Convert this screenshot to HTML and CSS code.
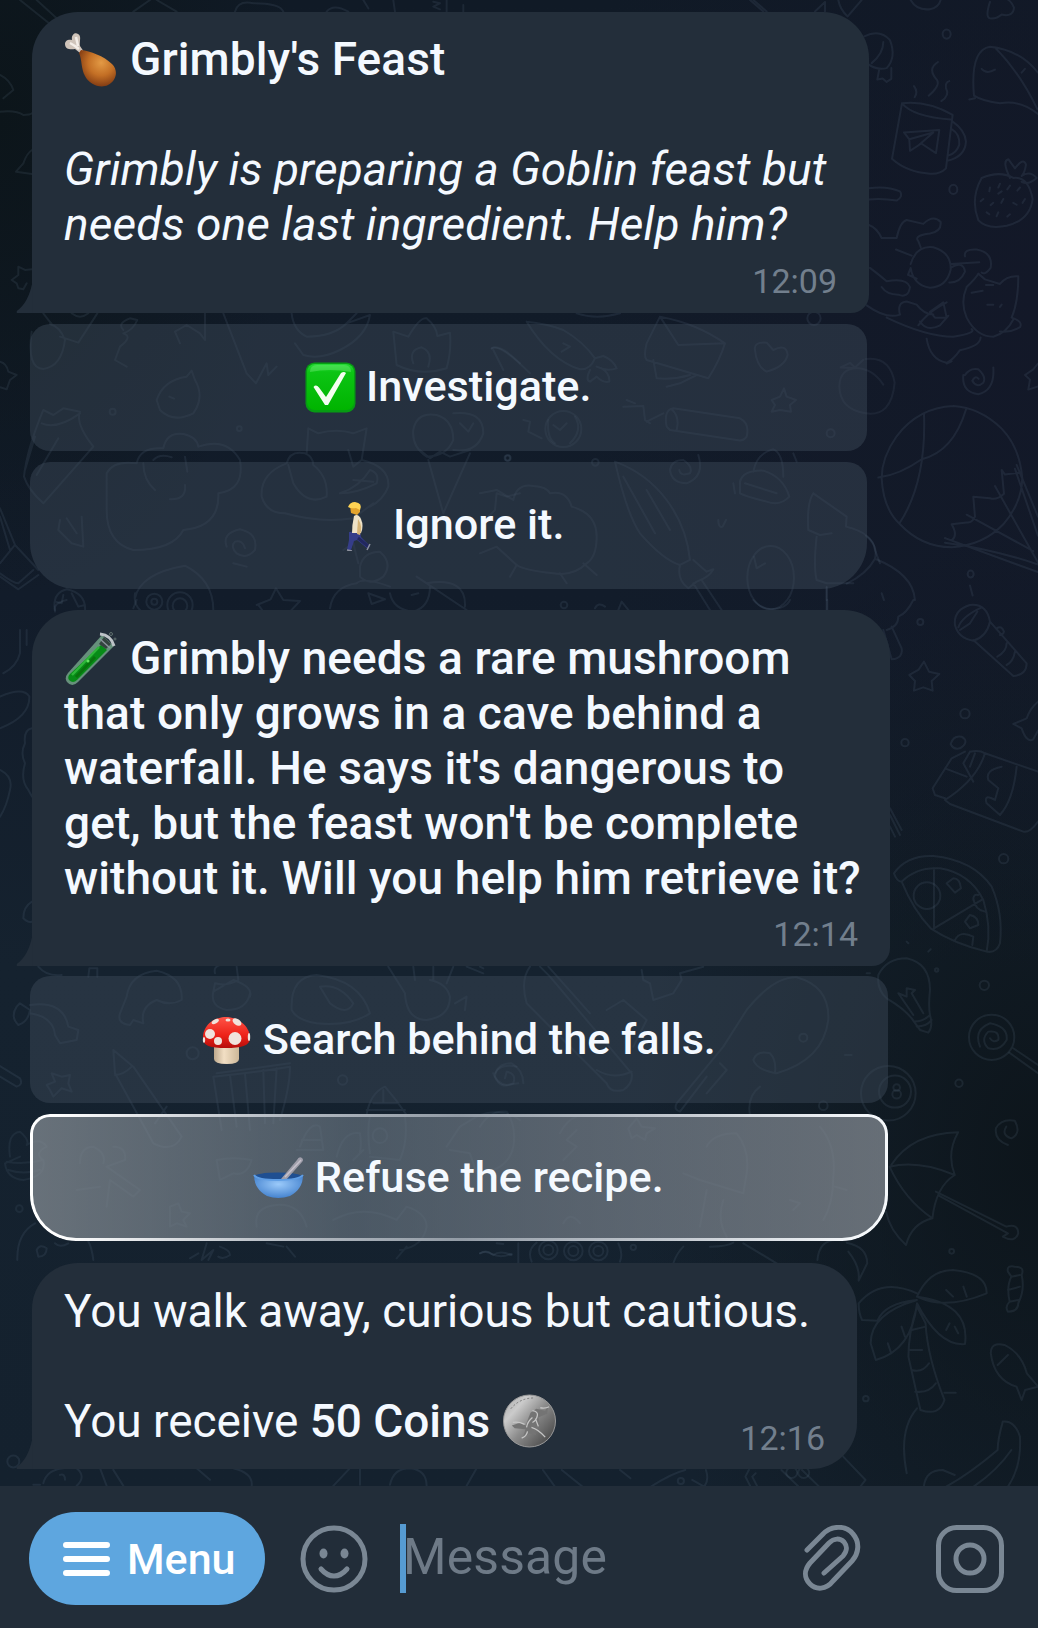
FILE: index.html
```html
<!DOCTYPE html>
<html lang="en">
<head>
<meta charset="utf-8">
<title>Grimbly's Feast</title>
<link rel="stylesheet" href="styles.css">
</head>
<body>
<main class="chat">
  <svg class="wallpaper" viewBox="0 0 1038 1486" aria-hidden="true">
    <!-- top right: mug, cap, strawberry, cat, balloon -->
    <g transform="translate(700 0) scale(.3333 .3827)">
      <path d="M150 0L190 30M160 0L200 30M345 30L375 5V30M415 0Q420 25 443 43L485 0M632 0Q650 28 690 24Q716 20 722 0M870 5Q855 45 870 48Q890 50 905 38Q940 45 942 20Q935 5 925 0"/>
      <path d="M493 95Q540 75 570 105Q590 150 560 178Q530 185 500 165M550 110Q550 140 515 165M538 180L532 208L548 205L560 214L574 206V178"/>
      <path d="M606 270L576 415Q620 450 690 454Q720 456 738 440L758 300Q680 262 606 270Q640 305 752 312M758 318Q795 340 798 370Q795 410 742 420M756 338Q780 350 778 378Q770 400 746 406M612 346L718 340L708 400L664 375L630 394L628 364ZM628 364L700 346L655 380M644 254Q655 240 642 225M686 250Q720 225 712 210Q680 180 714 162M724 264Q750 250 738 230Q735 215 748 212"/>
      <path d="M822 250Q810 130 870 122Q960 130 1014 190M822 250Q850 265 900 270Q960 260 1014 298M885 124Q960 190 1012 285M845 180Q860 195 885 182M965 190L975 180M808 260L825 257"/>
      <circle cx="740" cy="89" r="12"/><circle cx="760" cy="495" r="12"/>
      <path d="M845 465Q810 520 835 575Q860 600 920 590Q990 575 998 520Q985 460 940 465Q900 445 845 465M930 465Q905 420 925 416L945 440Q970 410 978 430Q975 450 965 460Q990 445 1010 465Q985 485 965 475M870 490L868 500M900 480L895 490M930 485L922 495M960 490L952 498M850 520L842 526M880 530L872 536M910 520L904 530M940 530L950 535M975 520L968 530M860 555L868 560M895 555L890 565M930 560L922 566M905 500L895 506"/>
      <path d="M507 492Q560 485 600 500Q610 515 590 524Q550 518 507 521M507 588Q530 595 545 622H590Q600 580 620 575L670 585Q700 560 722 580Q725 605 690 610Q640 615 655 630L662 646M588 652L635 668M632 690Q650 640 700 646Q755 660 752 705Q740 750 690 752Q640 745 632 700L624 718L650 728M752 690L838 685M795 670Q790 650 830 652Q880 660 872 700Q855 720 845 712M752 700Q790 680 795 710Q780 740 748 738M510 700Q540 720 560 735Q620 725 630 750Q625 780 595 770Q560 770 545 750M500 798Q560 835 600 822Q590 790 620 788L650 796Q670 820 700 822M560 830Q680 880 760 880Q830 870 815 860M655 850Q680 820 720 800L740 790M660 840Q680 868 720 850L745 825M690 815L730 790L740 830L705 830ZM800 750Q780 790 800 830Q830 880 880 880Q920 870 940 835M800 750Q830 725 835 715L855 730L900 742Q920 720 955 722Q955 790 935 830Q970 840 960 855Q930 870 900 866M815 765L848 760M858 745H880M862 796H880M900 802L905 796M680 885Q690 940 740 948Q760 940 780 915Q840 905 842 882M740 950L755 944"/>
      <path d="M790 980Q785 1025 835 1030Q885 1020 880 960M795 980Q810 960 835 965Q860 985 850 1000Q830 1015 817 995Q825 980 836 990M1014 950L1000 965L975 980L990 992L985 1018L1014 1010"/>
      <path d="M497 938Q570 930 584 1000Q575 1090 497 1080Q420 1070 418 1010Q420 960 475 962L422 960L450 948L465 960L490 940M475 962Q520 965 550 1005" class="dim"/>
      <path d="M760 1061Q655 1065 590 1140Q545 1195 545 1250Q550 1330 600 1370Q665 1430 755 1430Q850 1425 910 1370Q965 1315 967 1250Q960 1170 905 1120Q840 1065 760 1061M672 1080Q680 1260 598 1368M798 1070Q760 1180 665 1200Q600 1240 535 1248M958 1235L915 1240L905 1228L912 1290Q890 1308 870 1302L820 1298L825 1350Q815 1368 800 1365L755 1370Q775 1400 755 1412L735 1406L1014 1495M735 1418Q880 1435 1014 1475M800 1345L1000 1440M885 1270L1014 1470M950 1215L1014 1350M945 1225L1014 1400"/>
      <path d="M497 1400Q535 1425 525 1460Q640 1500 645 1568M525 1460Q500 1500 440 1525M380 1535V1568M545 1550L552 1568M810 1530L818 1556"/><circle cx="812" cy="1500" r="9"/>
    </g>
    <!-- left part of the first keyboard -->
    <g transform="translate(0 300) scale(.3333)">
      <path d="M0 185Q20 190 25 215L50 225L30 240L20 268L0 262M130 40Q145 60 155 72M215 40Q240 60 265 40M292 40L235 128L180 110M95 95Q80 205 130 207Q185 200 195 120Q180 80 150 72M370 90Q350 70 390 55L412 60Q400 90 370 100Q400 110 360 140L345 180L380 200M525 95L560 75L600 100L615 120V40M525 95L540 130M670 40L740 220L768 250L800 190L805 225L830 200M875 40Q880 90 920 110Q1000 110 1040 70L1110 45Q1100 110 1020 150Q960 180 910 165L885 130M1040 70L1070 40"/>
      <path d="M1190 195L1180 95L1225 110Q1260 50 1280 55Q1310 80 1312 108L1350 98Q1355 150 1340 205Q1260 230 1190 195M1240 190Q1225 150 1265 142Q1300 155 1285 200M1475 145Q1500 130 1560 190M470 300Q490 240 560 230L575 212L585 240Q615 290 580 340Q520 370 480 330ZM508 290L522 296"/>
      <path d="M72 530Q80 450 130 330L160 345L190 325L240 335Q225 370 280 440L130 610Q85 570 72 530ZM125 370Q170 390 240 340M105 410L75 510M175 415L110 525"/>
      <path d="M320 520Q340 480 410 490Q420 440 490 445Q500 395 550 402Q590 410 595 440Q680 410 720 480Q735 570 655 580Q660 680 550 690Q520 750 400 750Q320 730 320 630ZM460 480Q480 460 515 472M430 490Q430 540 465 570M555 470L562 515M555 555Q560 600 510 598M860 490Q780 520 785 590Q800 640 855 640Q960 670 1060 655L1120 610M860 490Q870 450 915 460Q940 470 940 495Q985 530 980 590Q920 620 880 550L865 495M920 460L925 385L955 400Q1010 385 1060 400L1100 385L1085 480Q1170 500 1165 560Q1150 600 1110 620M1045 450L1060 500L1085 480M1020 580Q1080 560 1110 510Q1140 520 1130 550Q1070 580 1020 580M1060 540L1120 545"/>
      <path d="M1240 390Q1250 335 1310 345Q1360 360 1360 420Q1340 470 1280 470Q1235 440 1240 390M1360 340Q1450 330 1450 400Q1430 460 1360 450M1260 450L1290 475L1320 455L1350 470L1410 450M1285 480L1330 640L1410 460M1380 370L1405 395L1420 370"/>
      <circle cx="338" cy="335" r="9"/><circle cx="718" cy="386" r="7"/><circle cx="1522" cy="474" r="8"/>
      <path d="M0 625L45 735L0 790M0 650L30 750M45 735L115 810M0 830L55 868L115 825M0 820Q40 850 55 850L100 810M180 660L175 690L215 730L250 740L245 650M200 655L230 700M680 740Q665 700 720 688Q775 700 765 750Q740 780 710 760Q690 740 705 725Q730 720 735 745M700 790L740 800M405 895Q420 820 555 797Q640 840 640 930M405 880Q400 910 420 930M1030 750L1060 730L1075 790M1080 800Q1090 755 1140 755Q1180 790 1150 830Q1110 860 1080 830ZM990 925Q1000 860 1070 850Q1090 830 1170 860M1170 880Q1180 930 1240 935Q1290 920 1290 860M1250 830L1400 930M1280 850Q1400 830 1395 920M1105 880L1155 898L1115 912ZM1235 885L1255 880"/>
      <circle cx="463" cy="905" r="24"/><circle cx="463" cy="905" r="9"/><circle cx="540" cy="915" r="38"/><circle cx="540" cy="917" r="22"/>
      <path d="M165 935Q155 880 200 868Q260 880 255 935M165 905L185 910L190 885M215 880L235 920L255 915M770 915L812 898L828 865L850 900L900 903L870 935M775 915L790 935M1455 660L1485 630L1490 580L1520 590L1560 580"/>
    </g>
    <!-- right part of the first keyboard -->
    <g transform="translate(480 300) scale(.3333)">
      <path d="M290 40Q350 60 420 40M140 65Q200 70 250 90Q310 125 345 175Q330 210 300 208Q210 180 140 65M345 175L370 168Q400 180 410 205Q380 215 350 200M330 210Q315 240 330 245L350 230Q370 250 388 245Q390 220 365 205M250 130L270 140L245 155M35 145Q60 130 150 220M40 150L70 210M540 50L500 130Q490 170 500 180L685 235Q720 180 735 130Q650 70 540 50L595 135L735 130M520 180L530 235Q580 240 630 225M560 260L600 250L650 225M825 150Q820 125 860 128L880 150Q920 130 923 165Q915 200 860 215Q830 200 825 150M875 300L900 290L912 265L920 290L948 300L930 315L933 335L900 330L875 335L885 315ZM500 365L550 340M560 380Q550 330 580 325L780 355Q810 370 800 410Q790 425 770 420L570 390ZM575 328Q600 350 590 390M430 320L490 318L495 360L510 370M440 300L465 310M130 360L150 365L145 395L185 415"/>
      <circle cx="250" cy="387" r="54"/><path d="M220 375L240 390L260 370M205 360Q200 415 225 430M285 350Q310 390 270 430"/>
      <circle cx="1002" cy="55" r="20"/><circle cx="1052" cy="400" r="12"/><circle cx="346" cy="487" r="10"/><circle cx="84" cy="474" r="8"/><circle cx="252" cy="915" r="10"/>
      <path d="M405 485Q440 640 480 700Q550 780 600 795L630 780Q620 680 560 600Q500 520 405 485ZM430 530L525 700M500 570L570 690M600 795Q590 840 625 865L650 845Q690 830 700 808L680 815L640 780M640 850L690 930M665 840L725 930M655 465Q675 530 620 550Q575 550 570 510Q575 480 610 480Q640 500 630 520Q600 530 598 510M820 515Q830 460 880 448Q910 460 910 530M780 545Q790 510 850 512Q910 530 928 590Q900 620 860 605Q800 590 780 580ZM795 550L890 580M940 460L950 485M760 550L765 580M1000 580Q980 610 985 690L1020 705L1055 700M1000 580L1100 650L1098 680Q1180 700 1185 750L1200 790M1010 710Q1000 800 1010 840L1040 850L1120 850M1040 860V930M715 660Q715 685 728 680L738 660"/>
      <ellipse cx="872" cy="833" rx="70" ry="95"/><path d="M822 770L830 805L855 790M0 580L50 570L100 600Q110 550 160 558Q200 560 210 580Q260 570 275 620Q350 640 350 710Q350 770 320 790Q280 830 220 820Q130 810 110 795L50 740L0 760M110 795L90 830M240 820L260 850M310 790L350 825M345 925Q355 905 375 920M415 930L425 905L445 930"/>
    </g>
    <!-- right edge, middle: torch, star, chocolate, pizza, bulb, lollipop -->
    <g transform="translate(740 600) scale(.3333)">
      <path d="M40 0Q60 25 95 28Q140 25 150 0M262 0V30M440 90Q475 80 475 50Q500 40 520 0M430 90L455 178Q490 175 485 145L455 80M645 75Q640 30 690 15Q740 10 750 65Q740 110 700 122Q655 115 645 75M655 82Q665 50 725 22M660 90L690 70L712 35M750 65L860 190Q860 225 820 228L700 120M770 85Q785 75 792 95Q790 105 780 105M800 130Q800 155 772 170M825 155Q820 185 800 195M535 210L552 185L567 215L598 222L575 243L578 272L550 262L522 272L525 243L508 225ZM894 305Q870 325 860 355L820 372L845 385Q860 430 880 418L894 392M632 432Q640 405 665 410Q690 425 660 445Q640 450 632 432M675 455L635 475L578 565L585 585L615 595M690 455Q720 450 735 460L894 515M735 460Q710 540 615 600L630 612L850 695Q870 700 894 665M690 455L670 490L700 545M615 505L680 530M705 460L690 500M830 500Q820 600 780 645L740 610Q730 580 765 600L775 565L745 540Q735 510 785 500M450 625L485 690M450 645L480 705M450 680L465 710"/>
      <path d="M462 820Q500 765 580 768Q700 780 755 860Q790 940 780 1030Q770 1060 740 1055Q640 1030 572 985Q520 930 485 845Q470 845 462 820M485 845Q530 800 600 805Q690 820 730 900Q755 980 740 1055M582 805V985L725 900M640 835Q660 835 663 865L645 878L620 850ZM690 945Q715 950 715 975L690 985L675 965ZM700 895Q705 930 735 935M645 1020Q660 990 700 1010L697 1035M700 900Q700 880 715 885"/><circle cx="561" cy="887" r="40"/>
      <path d="M522 1265Q500 1230 440 1195Q410 1170 415 1125Q440 1075 500 1075Q570 1090 570 1170Q565 1220 570 1245Q580 1280 565 1298L540 1290L522 1265Q550 1265 570 1245M530 1280Q560 1280 575 1260M520 1245L475 1180L500 1190L500 1165L525 1170L515 1180L550 1240M500 1025L505 1030M565 1055L572 1048"/>
      <circle cx="541" cy="66" r="9"/><circle cx="675" cy="341" r="14"/><circle cx="495" cy="428" r="11"/><circle cx="791" cy="776" r="14"/><circle cx="733" cy="1156" r="14"/><circle cx="590" cy="1110" r="5"/><circle cx="657" cy="1450" r="11"/>
      <circle cx="755" cy="1312" r="68"/><path d="M720 1340Q700 1290 750 1270Q805 1280 800 1320Q780 1355 745 1345Q720 1320 745 1295Q780 1290 775 1320Q760 1330 750 1315M820 1345L894 1395M808 1358L894 1420"/>
      <circle cx="445" cy="1480" r="82"/><circle cx="465" cy="1475" r="48"/><circle cx="470" cy="1463" r="10"/><circle cx="470" cy="1483" r="13"/>
    </g>
    <!-- second keyboard, left part -->
    <g transform="translate(0 960) scale(.3333)">
      <path d="M115 20Q140 50 185 45M265 50L268 25H292V50M50 140Q30 170 55 195Q85 185 90 150L60 130ZM90 135Q190 120 205 200L235 210L230 240L180 250L165 225Q160 170 90 160M360 160Q350 190 390 195L400 180L430 190Q420 140 470 120Q510 140 545 120Q550 50 470 32Q390 40 380 110ZM640 95Q630 140 680 150Q740 150 750 100M645 40Q640 20 660 15M710 20L715 60Q680 80 645 70L640 95L700 60Q760 80 750 110M875 150Q870 50 950 45Q1080 60 1110 160Q1050 200 950 190Q890 180 875 150M960 80Q1020 70 1060 130Q1040 170 990 130ZM1165 20L1215 100Q1220 180 1280 180Q1350 170 1350 110Q1340 70 1290 60M1240 20L1245 60M1300 20V60M1360 20L1340 70M1365 130L1400 110L1395 150M1400 20L1450 40"/>
      <path d="M150 390L140 375L165 365L155 340L185 350L210 345L205 370L215 395L185 385L160 410ZM0 318L60 355Q70 375 50 380L0 350M340 270L345 340L460 550Q520 580 545 530L400 320L340 270M345 345Q370 345 395 320M465 490L500 440M640 350L665 510M640 350Q750 340 870 320Q870 380 840 480M650 340L870 310M690 345L710 500M735 340L750 510M790 330L795 490M830 325L820 490M1100 465Q1110 400 1155 380Q1190 420 1220 465M1100 450H1215M1120 430H1195M1150 390V430M1485 340Q1500 310 1550 320M1480 340Q1490 370 1520 375L1555 370"/>
      <g class="dim">
        <path d="M30 590Q20 520 60 515Q90 540 80 555Q120 530 140 560Q100 580 130 600Q140 650 70 660Q20 655 15 610L60 590M20 605Q70 615 130 600M25 630Q70 645 120 630M240 610Q240 560 280 560Q320 580 310 610M340 560Q380 560 375 600L320 620L420 690L400 710L330 660L320 740M230 690L300 680M900 560Q930 480 960 500L970 570H890M905 540H965M1010 590Q1030 510 1080 520Q1085 550 1080 580M1110 580Q1100 510 1110 470M1215 470Q1225 540 1200 600L1110 590M1090 570L1060 600M1340 560L1380 500L1430 470Q1500 440 1560 480M1350 570L1410 580L1430 640M650 600Q700 590 755 600Q740 650 700 640L660 660ZM510 740L535 730L545 755L570 760L550 780L560 800L530 790L510 800ZM770 800Q760 740 830 735Q900 730 920 800M1000 780Q1090 730 1190 780L1220 740Q1280 760 1280 800Q1270 860 1200 870M1190 895L1220 860"/>
        <circle cx="1140" cy="527" r="22"/><circle cx="58" cy="746" r="10"/>
      </g>
      <path d="M52 900Q50 820 105 790M110 870Q120 850 140 865Q140 890 115 890ZM165 850Q180 865 205 850M280 900Q275 860 265 845M595 880L570 895M620 850L605 900L640 870L625 900M660 860Q690 870 690 885Q670 900 655 890M860 860L885 890M800 850L850 860M1440 880Q1460 870 1480 885Q1500 870 1535 885"/><circle cx="1028" cy="360" r="14"/><circle cx="578" cy="280" r="18"/>
    </g>
    <!-- second keyboard, right part -->
    <g transform="translate(480 960) scale(.3333)">
      <path d="M150 20Q120 60 140 130L380 370Q390 400 430 390Q460 370 455 340L210 50L180 20M205 20L330 160M350 330Q400 360 455 335M380 150L430 120L500 180L460 260M485 30L490 60L510 70L520 120L580 100L605 60L600 40L670 20M0 20L10 25M45 350Q50 310 95 310Q130 330 130 370M45 350Q60 390 100 370Q110 340 80 335L75 355M590 430L730 260L800 150Q880 50 950 52Q1050 80 1045 180Q1030 300 890 340Q830 330 820 300M590 430Q580 450 600 455L680 350M720 310L740 330L680 400M820 300Q830 270 870 280Q890 300 885 340M810 465Q800 410 840 380M1095 285H1115M1160 40H1170"/><circle cx="970" cy="233" r="12"/><circle cx="1030" cy="437" r="13"/>
      <g class="dim"><path d="M0 500Q30 450 80 455Q110 500 100 560Q90 610 40 630M240 520Q260 480 290 470M250 600L290 560L260 540L290 510M445 505L470 475L485 500L525 505L500 520L495 540L470 525L455 535ZM680 560Q700 520 770 520Q810 570 800 640L790 700L660 660L610 640M1020 500Q1070 560 1060 650Q1060 730 1030 780M660 800L680 690M730 720Q710 780 740 830M1065 680L1100 690M930 720L960 730L940 750M250 790Q270 750 300 790"/></g>
      <path d="M155 905Q140 870 170 848M420 905Q430 880 415 850M115 850V910M0 880Q20 868 35 882Q60 895 95 882M50 850L70 852M580 910Q590 880 610 860M690 860Q740 860 760 848M790 850L890 910"/>
      <circle cx="205" cy="870" r="28"/><circle cx="205" cy="870" r="15"/><circle cx="280" cy="873" r="28"/><circle cx="280" cy="873" r="15"/><circle cx="355" cy="873" r="28"/><circle cx="355" cy="873" r="15"/><circle cx="460" cy="862" r="8"/>
    </g>
    <!-- bottom right: umbrella, palm, fish, banana -->
    <g transform="translate(500 1090) scale(.3432 .3333)">
      <path d="M1140 225Q1200 130 1335 127Q1300 190 1325 255Q1220 210 1135 230Q1180 330 1260 385Q1200 400 1183 465Q1135 420 1125 365M1325 255Q1270 290 1260 385M1270 305L1475 410Q1510 400 1510 430Q1500 460 1465 440L1480 430L1280 318M1480 165Q1440 150 1445 115Q1460 85 1500 92Q1520 130 1490 145Q1460 135 1475 110"/>
      <path d="M925 510Q930 450 980 450M1010 458Q1070 470 1070 520L1045 572M1015 485Q1050 530 1045 570M1215 610Q1110 560 1045 640Q1045 670 1055 690L1100 692Q1120 640 1215 630Q1080 670 1080 760L1095 810Q1200 780 1215 640Q1280 770 1355 762Q1370 640 1215 620Q1250 540 1320 540Q1420 550 1418 610Q1300 660 1220 622M1215 650Q1190 730 1190 800L1225 960Q1280 980 1295 930Q1245 800 1240 700ZM1200 720L1240 710M1192 780H1230M1200 840Q1230 850 1250 820M1210 905Q1250 910 1270 880M1295 908H1328M1215 955Q1160 1020 1185 1150M1130 760L1140 790M1170 710L1180 740M1300 600L1320 620M1350 590L1360 620M1300 720L1310 700M1335 730L1325 710"/>
      <path d="M1480 545Q1475 525 1500 530Q1530 530 1520 555Q1530 600 1510 640Q1510 665 1480 665Q1470 650 1485 635Q1475 590 1490 560ZM1490 560L1515 555M1480 600L1515 590M1485 635L1510 630M1430 790Q1430 755 1470 765Q1520 790 1535 850L1568 890L1530 900L1520 930L1505 890Q1440 870 1430 790M1450 825L1480 795M1465 995Q1500 990 1515 1040Q1520 1130 1480 1190M1465 995Q1450 1050 1450 1080Q1370 1150 1300 1190M1235 1190Q1240 1140 1290 1140L1325 1155M1490 1080Q1450 1140 1380 1190M125 1140L160 1190M180 1140L240 1190M350 1140L380 1165M440 1190Q500 1150 540 1140M600 1140Q610 1170 595 1190L560 1170M725 1140L715 1160L730 1190M745 1150L735 1160L750 1190M820 1140L870 1190M880 1140L930 1190M1000 1100L1065 1170L1050 1190"/><circle cx="1066" cy="926" r="8"/><circle cx="1316" cy="484" r="7"/><circle cx="527" cy="1173" r="9"/><circle cx="850" cy="1148" r="16"/><circle cx="885" cy="1148" r="16"/>
    </g>
    <!-- top edge and left edge -->
    <g transform="scale(.3333)">
      <path d="M60 0L150 72M110 0L170 55M400 35L450 0M470 0L530 35M705 35Q715 0 760 10Q840 10 850 35M980 35Q1000 10 1045 35M1090 0L1105 25M1180 0L1185 35M1300 5L1320 10L1300 20L1320 28M1340 35V0M1390 35V15M0 225Q30 240 40 270L10 295M0 335Q50 330 70 345Q90 345 96 340M96 450Q80 460 70 490L48 515L96 522M35 840L55 825V800L75 810L96 808M35 840L50 850L55 865L70 868L80 850M60 1890V1960Q50 2000 10 2020M80 1890V1935M0 2090Q70 2060 88 2090Q90 2150 0 2185M96 2185Q70 2190 75 2230Q60 2260 75 2290Q60 2340 85 2370L96 2390M0 2310Q40 2330 30 2370Q20 2420 0 2450M96 2705Q70 2720 70 2755Q85 2770 96 2765"/>
      <path d="M165 1830Q160 1810 200 1800M400 1825L410 1800M100 4455H120M130 4450Q140 4410 190 4405M230 4405Q260 4430 230 4458M180 4425Q195 4420 195 4440M300 4405L320 4458M340 4410L370 4458M590 4405L630 4440M700 4405Q760 4420 755 4458M1050 4405L1000 4458M1080 4405V4455M1170 4455Q1180 4405 1230 4405Q1280 4410 1280 4458M1430 4405L1400 4458"/><circle cx="40" cy="4385" r="18"/>
    </g>
  </svg>

  <article class="message message-quest">
    <div class="bubble">
      <svg class="tail" viewBox="0 0 16 30"><path d="M16 0V30H.5V28Q12 20 16 0Z"/></svg>
      <p class="line title"><svg class="emoji" viewBox="0 0 53 54">
        <defs><radialGradient id="meat" cx=".6" cy=".35" r=".7"><stop offset="0" stop-color="#e39a45"/><stop offset=".5" stop-color="#c36f25"/><stop offset="1" stop-color="#7a3510"/></radialGradient></defs>
        <path d="M1 11C1 7 5 6 8 7C7 2 11-1 14 1C18 3 15 9 16 13L20 19L16 20L11 16C6 17 1 16 1 11Z" fill="#cfc4ba"/><path d="M6 10Q10 12 15 16M12 4L14 13" stroke="#f4eee8" stroke-width="2.5" fill="none"/>
        <path d="M17 17C26 18 40 23 48 31C55 38 52 48 44 52C36 56 25 51 21 43C17 36 18 26 15 20Z" fill="url(#meat)"/></svg> Grimbly's Feast</p>
      <p class="line blank"></p>
      <p class="line story">Grimbly is preparing a Goblin feast but<br>needs one last ingredient. Help him?</p>
      <time class="time">12:09</time>
    </div>
    <div class="keyboard">
      <button class="key"><svg class="key-emoji" viewBox="0 0 51 51">
        <defs><linearGradient id="tick" x2="0" y2="1"><stop offset="0" stop-color="#25dc35"/><stop offset=".18" stop-color="#0cc414"/><stop offset="1" stop-color="#00b400"/></linearGradient></defs>
        <rect x=".5" y=".5" width="50" height="50" rx="9" fill="#079b13"/><rect x="2" y="2" width="47" height="46" rx="8" fill="url(#tick)"/><path d="M5 10Q5 3 12 3H39Q46 3 46 10Q25 6 5 10Z" fill="#7bea80" opacity=".4"/>
        <path d="M8.500 25Q11 22 14 25.500L21 35L36 11Q39 9 41 11L23 43H20Z" fill="#f4fff0"/></svg> <span>Investigate.</span></button>
      <button class="key key-last"><svg class="key-emoji" viewBox="0 0 51 51">
        <g transform="translate(0 2)"><path d="M17 30L28 29L29 35L38 44L36 47L25 38L22 39L19 48L15 48L17 38Z" fill="#353d89"/><path d="M26 36L37 45" stroke="#22285f" stroke-width="3"/><path d="M15 48L20 49M35 48L38 42" stroke="#8d919e" stroke-width="1.500"/>
        <path d="M22 14Q26 11 29 17Q32 24 29 31L20 31Q20 23 22 14Z" fill="#eee2c7"/><path d="M26 17Q31 24 28 33L25 32Z" fill="#d5b376"/>
        <path d="M18 4Q25 0 28 5V10L25 13L19 11Z" fill="#e3a32c"/><path d="M16 5Q18 0 23 0Q31 1 28 8L24 6Q19 7 16 5Z" fill="#ffd353"/></g></svg> <span>Ignore it.</span></button>
    </div>
  </article>

  <article class="message message-cave">
    <div class="bubble">
      <svg class="tail" viewBox="0 0 16 30"><path d="M16 0V30H.5V28Q12 20 16 0Z"/></svg>
      <p class="line strong"><svg class="emoji" viewBox="0 0 53 54">
        <path d="M38 3L50 14L14 50Q8 56 3 50Q0 46 4 41Z" fill="#66907b"/><path d="M37 13L43 18L13 48Q9 52 5 48Q3 45 6 42Z" fill="#078b17"/><path d="M35 15L8 43" stroke="#2fb53a" stroke-width="2.500"/><path d="M31 25L12 45" stroke="#08730d" stroke-width="3"/>
        <path d="M40 5L47 12L42 17L35 12Z" fill="#34433f"/><path d="M36 2Q47 3 50 14" fill="none" stroke="#bdc3c7" stroke-width="3"/><path d="M36 7L46 16" stroke="#89949a" stroke-width="1.500"/><circle cx="47" cy="2" r="1.500" fill="none" stroke="#60716f"/><circle cx="51" cy="7" r="1" fill="none" stroke="#60716f"/><circle cx="24" cy="29" r="1.500" fill="#62e260"/></svg> Grimbly needs a rare mushroom<br>that only grows in a cave behind a<br>waterfall. He says it's dangerous to<br>get, but the feast won't be complete<br>without it. Will you help him retrieve it?</p>
      <time class="time">12:14</time>
    </div>
    <div class="keyboard">
      <button class="key"><svg class="key-emoji" viewBox="0 0 51 51">
        <defs><linearGradient id="cap" x2="0" y2="1"><stop offset="0" stop-color="#ff5347"/><stop offset=".6" stop-color="#ed2218"/><stop offset="1" stop-color="#b50e0b"/></linearGradient><linearGradient id="stem"><stop offset="0" stop-color="#bda98d"/><stop offset=".4" stop-color="#f2dfc4"/><stop offset="1" stop-color="#ccb798"/></linearGradient></defs>
        <path d="M13 30H38V45Q38 50 26 50Q13 50 13 45Z" fill="url(#stem)"/>
        <path d="M2 23C3 9 15 3 25 3C37 3 49 12 49 24C49 32 40 34 25 34C10 34 1 32 2 23Z" fill="url(#cap)"/>
        <g fill="#f0e3dc"><circle cx="9" cy="20" r="5"/><circle cx="34" cy="24.500" r="6.500"/><circle cx="17" cy="27" r="4"/><ellipse cx="36" cy="8" rx="5" ry="3" transform="rotate(35 36 8)"/><ellipse cx="14" cy="7.500" rx="4" ry="2" transform="rotate(-30 14 7)"/><ellipse cx="27" cy="6" rx="2.500" ry="1.500"/><ellipse cx="3" cy="26" rx="1.200" ry="3"/><ellipse cx="48" cy="23" rx="1.200" ry="4"/></g></svg> <span>Search behind the falls.</span></button>
      <button class="key key-last key-active"><svg class="key-emoji" viewBox="0 0 51 51">
        <defs><radialGradient id="bowl" cx=".5" cy=".4" r=".6"><stop offset="0" stop-color="#9bcafa"/><stop offset="1" stop-color="#4583cf"/></radialGradient></defs>
        <g transform="translate(0 2)"><ellipse cx="25" cy="22.500" rx="24" ry="4" fill="#1f4f91"/><path d="M28 25L44 6Q46 2 49 4Q51 6 49 8L33 26Z" fill="#a09fab"/><path d="M32 23L48 6" stroke="#c6c2cc" stroke-width="1.500"/>
        <path d="M1 21Q3 26 25 26Q47 26 50 21Q50 35 37 42Q25 46 14 42Q1 35 1 21Z" fill="url(#bowl)"/><path d="M1 21Q4 26 25 26Q46 26 50 21" fill="none" stroke="#5f9ee5" stroke-width="2"/></g></svg> <span>Refuse the recipe.</span></button>
    </div>
  </article>

  <article class="message message-reward">
    <div class="bubble">
      <svg class="tail" viewBox="0 0 16 30"><path d="M16 0V30H.5V28Q12 20 16 0Z"/></svg>
      <p class="line">You walk away, curious but cautious.</p>
      <p class="line blank"></p>
      <p class="line reward">You receive <b>50 Coins</b> <svg class="emoji coin" viewBox="0 0 54 55">
        <defs><linearGradient id="coin" x2=".9" y2=".8"><stop offset="0" stop-color="#a6a6a6"/><stop offset=".3" stop-color="#cbcbcb"/><stop offset=".6" stop-color="#8c8c8c"/><stop offset="1" stop-color="#525252"/></linearGradient></defs>
        <circle cx="27" cy="27.5" r="26.5" fill="url(#coin)" stroke="#9a9a9a"/><path d="M8 15Q17 4 32 4" fill="none" stroke="#777" stroke-dasharray="2 2"/>
        <path d="M9 32L18 29L23 32L28 19L34 15L43 17L46 12L45 20L36 24L38 32L31 36L34 42L27 40L20 45L23 36L12 35Z" fill="#747474"/><path d="M10 29Q16 28 22 31M30 17Q36 18 35 22Q34 27 30 29M29 34Q36 36 43 44M38 14Q43 15 47 13M30 24Q25 28 24 34M19 45Q24 43 25 38M33 25L36 33" fill="none" stroke="#c6c6c6" stroke-width="1.300"/></svg></p>
      <time class="time">12:16</time>
    </div>
  </article>
</main>

<footer class="composer">
  <button class="menu"><svg class="menu-icon" viewBox="0 0 47 36"><path d="M3 4H44M3 18H44M3 32H44"/></svg><span>Menu</span></button>
  <svg class="icon smiley" viewBox="0 0 68 68"><circle cx="34" cy="34" r="31"/><path d="M21 44Q27 51 34 51Q41 51 47 44"/><ellipse class="fill" cx="23.5" cy="28.500" rx="4" ry="5"/><ellipse class="fill" cx="44.5" cy="28.500" rx="4" ry="5"/></svg>
  <div class="field"><span class="caret"></span><span class="placeholder">Message</span></div>
  <svg class="icon clip" viewBox="0 0 58 68"><path d="M4 25L19 10C28 0 43 0 50 9C57 17 56 28 49 36L30 56C23 65 13 65 7 59C1 53 1 45 7 38L26 18C31 13 37 13 41 17C45 22 44 26 40 31L21 48"/></svg>
  <svg class="icon camera" viewBox="0 0 68 68"><rect x="2.5" y="2.5" width="63" height="63" rx="18"/><circle cx="34" cy="34" r="14"/></svg>
</footer>
</body>
</html>
```
FILE: styles.css
```css
* { box-sizing: border-box; }

body {
  margin: 0;
  width: 1038px;
  height: 1628px;
  display: flex;
  flex-direction: column;
  overflow: hidden;
  background: #101923;
  font-family: Roboto, "Liberation Sans", sans-serif;
  color: #f4f9ff;
}

p { margin: 0; }

button {
  border: 0;
  padding: 0;
  color: inherit;
  font: inherit;
}

.chat {
  position: relative;
  height: 1486px;
  flex: none;
  padding: 12px 0 0 32px;
  display: flex;
  flex-direction: column;
  background:
    radial-gradient(ellipse 480px 680px at 100% 20%, #131828 0, #13182800 100%),
    radial-gradient(ellipse 300px 480px at 0 8%, #0c151a 0, #0c151a00 100%),
    radial-gradient(ellipse 400px 640px at 100% 78%, #0d151b 0, #0d151b00 100%),
    linear-gradient(#101a26 0, #121c2a 40%, #15222f 65%, #14212e 100%);
}

.wallpaper {
  position: absolute;
  left: 0;
  top: 0;
  width: 1038px;
  height: 1486px;
  fill: none;
  stroke: rgba(120, 145, 165, .125);
  stroke-width: 2;
  stroke-linecap: round;
  stroke-linejoin: round;
}

.wallpaper path,
.wallpaper circle,
.wallpaper ellipse { vector-effect: non-scaling-stroke; }

.wallpaper .dim { opacity: .8; }

.message { position: relative; }
.message-quest { height: 598px; width: 837px; }
.message-cave { height: 653px; width: 858px; }
.message-reward { width: 825px; }

.bubble {
  position: relative;
  padding: 20px 32px 0;
  border-radius: 46px 46px 18px 0;
  background: #232e3a;
}

.message-quest .bubble { height: 301px; }
.message-cave .bubble { height: 355.5px; padding-top: 21px; }
.message-reward .bubble {
  height: 206px;
  padding-top: 21px;
  border-bottom-right-radius: 46px;
}

.tail {
  position: absolute;
  left: -16px;
  bottom: 0;
  width: 16.5px;
  height: 30px;
  fill: #232e3a;
}

.line {
  font-size: 46px;
  line-height: 54.9px;
  letter-spacing: -.04px;
  white-space: nowrap;
}

.blank { height: 54.9px; }
.title, .strong, .line b { font-weight: 500; }
.title, .strong { letter-spacing: .09px; }
.story { font-style: italic; letter-spacing: .09px; }

.emoji {
  display: inline-block;
  width: 53px;
  height: 54px;
  margin-right: 1.5px;
  vertical-align: -11.5px;
}

.coin { margin: 0 0 0 1px; }

.time {
  position: absolute;
  right: 32px;
  bottom: 12px;
  font-size: 34px;
  line-height: 40px;
  color: #727f8d;
}

.message-reward .time { bottom: 11px; }

.keyboard {
  margin: 10.5px 0 0 -2.5px;
  width: 100%;
  display: flex;
  flex-direction: column;
  gap: 11px;
}

.key {
  position: relative;
  height: 127px;
  display: flex;
  align-items: center;
  justify-content: center;
  gap: 10.5px;
  border-radius: 20px;
  background: rgba(60, 75, 90, .46);
  font-size: 43.2px;
  font-weight: 500;
  line-height: 52px;
  white-space: nowrap;
}

.key-last { border-radius: 20px 20px 46px 46px; }

.key-emoji {
  width: 51px;
  height: 51px;
}

.key-active {
  background: linear-gradient(90deg, rgba(135, 143, 150, .73), rgba(112, 125, 137, .6) 38%, rgba(119, 128, 138, .68) 62%, rgba(136, 143, 151, .72));
}

.key-active::before {
  content: "";
  position: absolute;
  inset: 0;
  padding: 3px;
  border-radius: inherit;
  background: linear-gradient(90deg, #fff 3%, #b2b9c1 30%, #939ca6 50%, #c3c9d0 75%, #f5f8fb 97%);
  mask: linear-gradient(#000 0 0) content-box exclude, linear-gradient(#000 0 0);
}

.composer {
  height: 142px;
  flex: none;
  display: flex;
  align-items: center;
  padding: 3px 34px 0 29px;
  background: #222d39;
}

.menu {
  width: 235.5px;
  height: 93px;
  padding-left: 34px;
  display: flex;
  align-items: center;
  gap: 17px;
  border-radius: 47px;
  background: #5ea6df;
  color: #fff;
  font-size: 43px;
  font-weight: 500;
}

.menu-icon {
  width: 47px;
  height: 36px;
  fill: none;
  stroke: #fff;
  stroke-width: 6;
  stroke-linecap: round;
}

.icon {
  width: 68px;
  height: 68px;
  fill: none;
  stroke: #7a8794;
  stroke-width: 5;
  stroke-linecap: round;
  stroke-linejoin: round;
}

.icon .fill { fill: #7a8794; stroke: none; }
.smiley { margin-left: 35px; }

.field {
  margin-left: 32.5px;
  width: 403px;
  display: flex;
  align-items: center;
  font-size: 49.8px;
  line-height: 66px;
  color: #6e7a87;
}

.placeholder {
  margin: -3px 0 0 -3px;
  letter-spacing: .2px;
}

.caret {
  width: 6px;
  height: 69px;
  background: #569bd2;
}

.clip { width: 58px; }
.camera { margin-left: auto; }
```
